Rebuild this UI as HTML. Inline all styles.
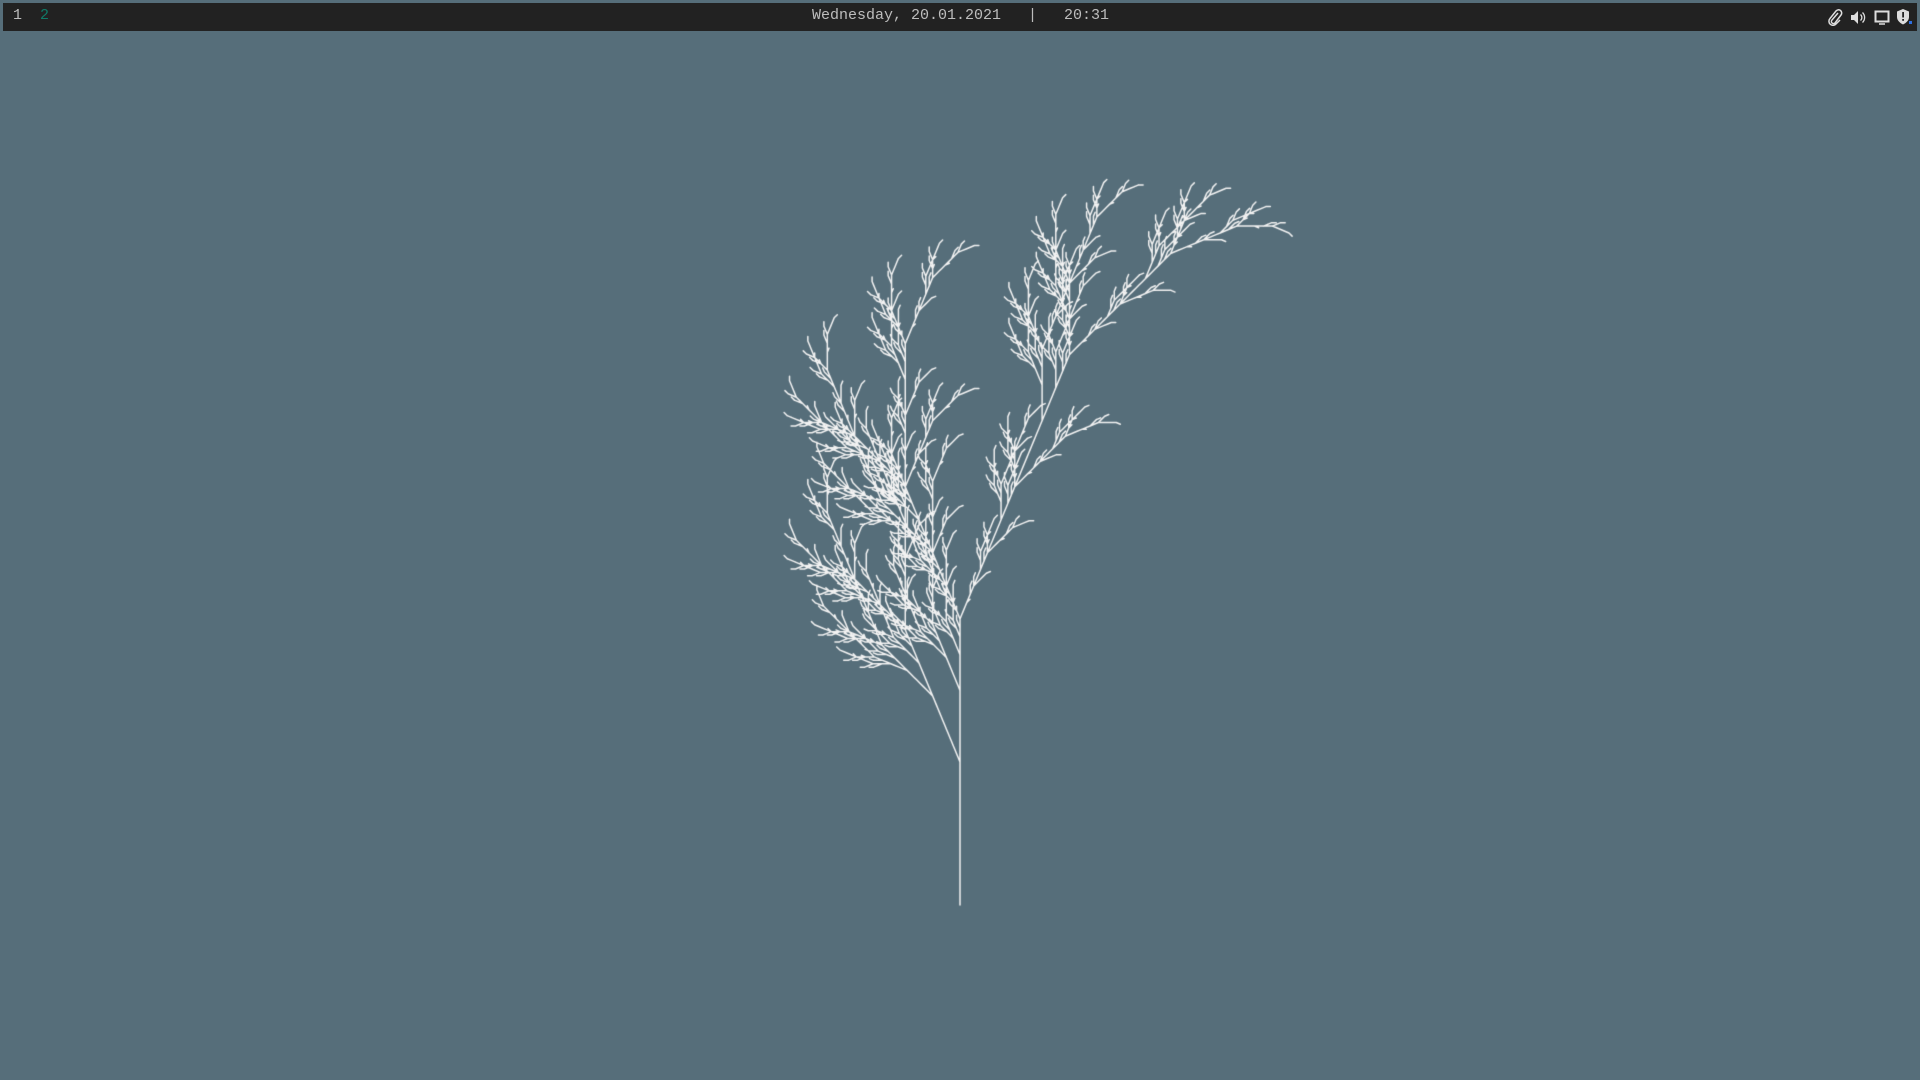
<!DOCTYPE html>
<html><head><meta charset="utf-8"><style>
html,body{margin:0;padding:0;width:1920px;height:1080px;overflow:hidden;background:#566e7a;}
#bar{position:absolute;left:3px;top:3px;width:1914px;height:28px;background:#222222;font-family:"Liberation Mono",monospace;font-size:15px;color:#bdbdbd;}
#bar span{position:absolute;top:3px;line-height:20px;white-space:pre;}
canvas{position:absolute;left:0;top:0;}
svg{position:absolute;}
</style></head><body>
<canvas id="c" width="1920" height="1080"></canvas>
<div id="bar">
<span style="left:10px">1</span>
<span style="left:37px;color:#0f7a68">2</span>
<span style="left:809px">Wednesday, 20.01.2021   |   20:31</span>
<svg style="left:1824px;top:6px" width="16" height="17" viewBox="0 0 16 17"><path d="M11 4 L5 11 a2 2 0 0 0 3 3 L14 6 a3.2 3.2 0 0 0 -5 -4 L3 9.5 a4 4 0 0 0 6 5.5 L13 11" fill="none" stroke="#ddd" stroke-width="1.5"/></svg>
<svg style="left:1847px;top:7px" width="16" height="15" viewBox="0 0 16 15"><path d="M1 5h3l4-4v13l-4-4H1z" fill="#ddd"/><path d="M10.5 4.5a4 4 0 0 1 0 6M12.5 2.5a7 7 0 0 1 0 10" fill="none" stroke="#ddd" stroke-width="1.3"/></svg>
<svg style="left:1871px;top:7px" width="16" height="15" viewBox="0 0 16 15"><rect x="1.5" y="1.5" width="13" height="10" fill="none" stroke="#ddd" stroke-width="2"/><path d="M5 14h6" stroke="#ddd" stroke-width="1.5"/></svg>
<svg style="left:1893px;top:5px" width="17" height="18" viewBox="0 0 17 18"><path d="M7 1 L13 3.5 V9 C13 12.5 10 15 7 16.5 C4 15 1 12.5 1 9 V3.5Z" fill="#ddd"/><rect x="6.2" y="4" width="1.8" height="5.5" fill="#222"/><rect x="6.2" y="11" width="1.8" height="1.8" fill="#222"/><rect x="13" y="13" width="3" height="3" fill="#2f6fe0"/></svg>
</div>
<script>
var s="X";
for(var i=0;i<6;i++){var o="";for(var j=0;j<s.length;j++){var ch=s[j];if(ch==="X")o+="F+[[X]-X]-F[-FX]+X";else if(ch==="F")o+="FF";else o+=ch;}s=o;}
var ctx=document.getElementById("c").getContext("2d");
ctx.strokeStyle="#f2f2f2";ctx.lineWidth=1.5;ctx.lineCap="round";
var x=960,y=905,a=-Math.PI/2,u=4.47,d=22.5*Math.PI/180,st=[];
ctx.beginPath();
for(var k=0;k<s.length;k++){var c=s[k];
if(c==="F"){var nx=x+u*Math.cos(a),ny=y+u*Math.sin(a);ctx.moveTo(x,y);ctx.lineTo(nx,ny);x=nx;y=ny;}
else if(c==="+")a-=d;else if(c==="-")a+=d;
else if(c==="[")st.push([x,y,a]);else if(c==="]"){var p=st.pop();x=p[0];y=p[1];a=p[2];}}
ctx.stroke();
</script>
</body></html>
